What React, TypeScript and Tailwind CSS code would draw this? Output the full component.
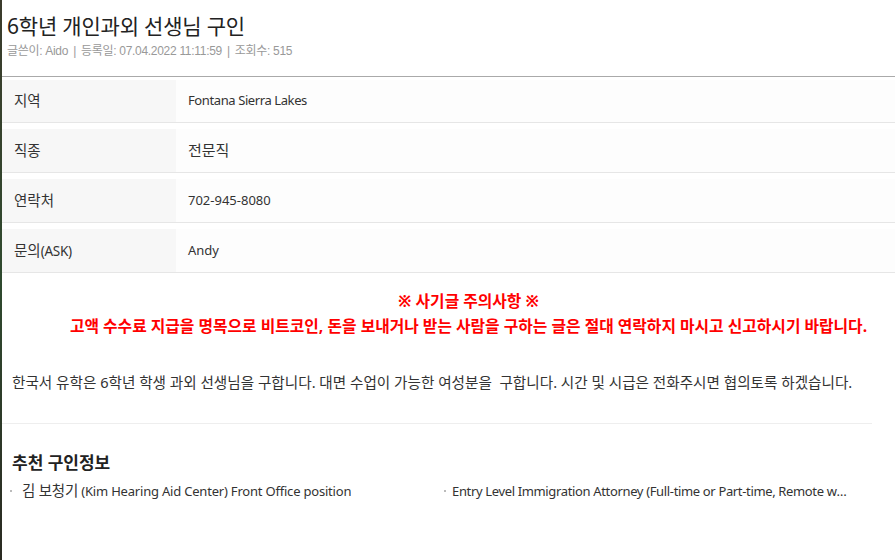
import React from "react";

const ko = { fontFamily: '"Noto Sans", "Noto Sans CJK KR", sans-serif' };
const arial = { fontFamily: '"Liberation Sans", "Noto Sans CJK KR", sans-serif' };

function Row({ label, value, first }: { label: React.ReactNode; value: React.ReactNode; first?: boolean }) {
  return (
    <div className="pt-[3px] border-b border-[#e6e6e6]">
      <div className={`flex ${first ? "h-[42px]" : "h-[46px] pt-[3px]"}`}>
        <div className="w-[174px] bg-[#f7f7f7] flex items-center pl-[12px] text-[14.5px] text-[#333]">{label}</div>
        <div className="flex-1 bg-[#fdfdfd] flex items-center pl-[12px] text-[13px] text-[#333]">{value}</div>
      </div>
    </div>
  );
}

export default function App() {
  return (
    <div className="w-[895px] h-[560px] overflow-hidden bg-white flex" style={ko}>
      <div className="w-[2px] h-full bg-gradient-to-b from-[#3b3b2c] via-[#2f4a2f] to-[#2a2a22]" />
      <div className="flex-1 min-w-0">
        <div className="pl-[5px] pt-[11px] h-[77px] border-b border-[#aaa]">
          <h1 className="text-[21px] leading-[30px] text-[#222] tracking-[-0.2px]">6학년 개인과외 선생님 구인</h1>
          <div className="text-[12px] leading-[20px] text-[#999] tracking-[-0.3px]" style={arial}>
            글쓴이: Aido <span className="mx-[2px]">|</span> 등록일: 07.04.2022 11:11:59 <span className="mx-[2px]">|</span> 조회수: 515
          </div>
        </div>
        <Row label="지역" value={<span className="tracking-[-0.4px]">Fontana Sierra Lakes</span>} first />
        <Row label="직종" value={<span className="text-[15px]">전문직</span>} />
        <Row label="연락처" value="702-945-8080" />
        <Row label={<span>문의<span className="text-[13.5px] tracking-[-0.3px]">(ASK)</span></span>} value="Andy" />
        <div className="pt-[16px] pl-[40px] text-center text-[15.8px] leading-[25px] font-bold text-[#f00]">
          <div>※ 사기글 주의사항 ※</div>
          <div className="whitespace-nowrap">고액 수수료 지급을 명목으로 비트코인, 돈을 보내거나 받는 사람을 구하는 글은 절대 연락하지 마시고 신고하시기 바랍니다.</div>
        </div>
        <div className="pl-[10px] pt-[33px] pb-[31px] text-[14.6px] leading-[20px] text-[#333] whitespace-pre">
          한국서 유학은 6학년 학생 과외 선생님을 구합니다. 대면 수업이 가능한 여성분을  구합니다. 시간 및 시급은 전화주시면 협의토록 하겠습니다.
        </div>
        <div className="w-[870px] border-t border-[#eee]" />
        <div className="pl-[10px] pt-[28px] text-[17px] leading-[22px] font-bold text-[#222]">추천 구인정보</div>
        <div className="flex pt-[7px] text-[13px] leading-[18px] text-[#333]">
          <div className="w-[438px] flex items-center pl-[8px]">
            <span className="w-[2px] h-[2px] bg-[#bbb] mr-[10px] shrink-0" />
            <span className="truncate tracking-[-0.2px]"><span className="text-[14.5px]">김 보청기</span> (Kim Hearing Aid Center) Front Office position</span>
          </div>
          <div className="w-[414px] flex items-center pl-[4px]">
            <span className="w-[2px] h-[2px] bg-[#bbb] mr-[6px] shrink-0" />
            <span className="truncate tracking-[-0.35px]">Entry Level Immigration Attorney (Full-time or Part-time, Remote work available)</span>
          </div>
        </div>
      </div>
    </div>
  );
}
